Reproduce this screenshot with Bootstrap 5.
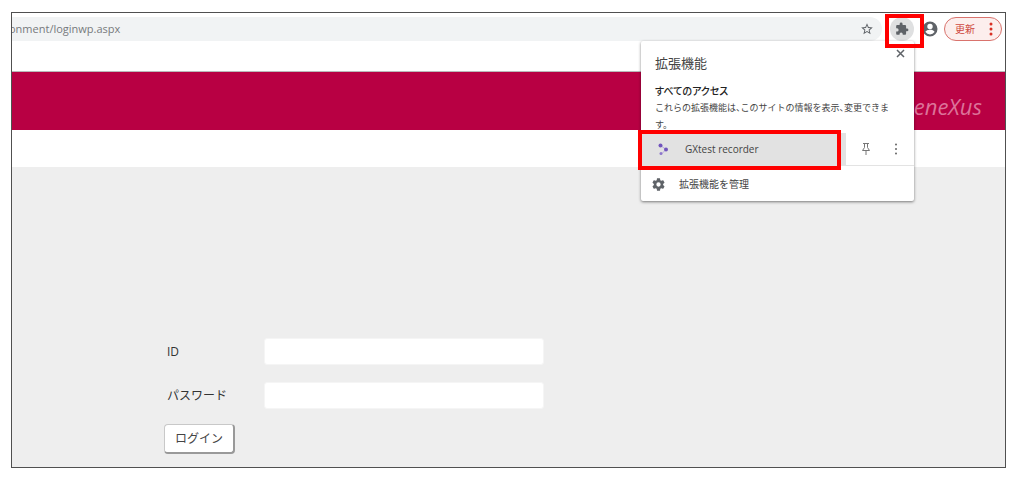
<!DOCTYPE html>
<html lang="ja">
<head>
<meta charset="utf-8">
<meta name="viewport" content="width=device-width, initial-scale=1">
<title>ログイン</title>
<link rel="stylesheet" href="https://cdn.jsdelivr.net/npm/bootstrap@5.3.0/dist/css/bootstrap.min.css">
<style>
  body { font-family: "Open Sans", "Noto Sans CJK JP", sans-serif; font-size: 12px; line-height: 18px; color: #444; background: #fff; padding: 12px 18px 27px 11px; }
  button { color: inherit; }
  svg { display: block; flex: none; }
  .window { border: 1px solid #505050; min-height: calc(100vh - 39px); background: #eee; }
  .toolbar { height: 59px; padding: 4px 3px 0 0; border-bottom: 1px solid #b9b9b9; }
  .address { height: 24px; background: #f1f3f4; border-radius: 0 12px 12px 0; padding-right: 8px; overflow: hidden; }
  .address input { border: 0; outline: 0; background: none; color: #777a7d; font-size: 11px; text-indent: -3px; padding: 0; min-width: 0; }
  .plain { border: 0; background: none; padding: 0; }
  .ext-btn { width: 24px; height: 24px; border-radius: 50%; background: #dfe0e1; margin: 0 7px 0 8px; }
  .mark-box { position: absolute; border: 4px solid #f00; pointer-events: none; z-index: 5; }
  .ext-btn .mark-box { inset: -3px -10px -7px -5px; }
  .update { height: 24px; width: 58px; border: 1px solid #d9736d; border-radius: 12px; background: #fceeed; color: #cf4a42; font-size: 10px; padding: 0 8px 0 10px; margin-left: 5px; }
  .banner { height: 58px; background: #b80043; padding: 22px 23px 0 0; }
  .brand-text { color: #dc7399; font: italic 500 22px/24px "Open Sans", sans-serif; }
  .strip { height: 37px; }
  .ext-panel { position: absolute; z-index: 3; top: 28px; right: 91px; width: 273px; height: 160px; background: #fff; border-radius: 2px; box-shadow: 0 1px 3px rgba(0,0,0,.5); font-size: 10px; line-height: 17px; padding-top: 12px; }
  .ext-panel h1 { font-size: 13px; line-height: 20px; font-weight: 400; margin: 0 14px 10px; }
  .ext-panel h2 { font-size: 10px; line-height: 16px; font-weight: 500; color: #222; margin: 0 14px; font-feature-settings: "palt"; }
  .ext-panel p { font-size: 9px; height: 34px; margin: 0 14px; width: 238px; font-feature-settings: "halt"; }
  .close-btn { position: absolute; right: 9px; top: 8px; }
  .ext-row { height: 33px; border-bottom: 1px solid #e3e3e3; }
  .ext-main { width: 205px; background: #e2e2e2; padding: 0 17px; gap: 16px; }
  .ext-row .mark-box { left: -3px; top: -3px; width: 203px; height: 40px; }
  .manage { height: 36px; padding: 0 11px; gap: 14px; }
  .login { padding: 171px 15px 12px 153px; }
  .login label { width: 99px; padding-left: 2px; color: #333; }
  .login .form-control { width: 280px; height: 27px; padding: 2px 6px; font-size: 12px; border: 1px solid #f5f5f5; border-radius: 3px; background: #fff; }
  .login form { gap: 17px; }
  .login-btn { width: 71px; height: 30px; margin: -2px 0 0 -1px; border: 1px solid #c8c8c8; border-right: 2px solid #999; border-bottom: 2px solid #999; border-radius: 4px; background: #fff; }
</style>
</head>
<body>
<div class="window position-relative">
  <header class="toolbar d-flex align-items-start bg-white">
    <div class="address flex-grow-1 d-flex align-items-center">
      <input class="flex-grow-1" type="text" aria-label="URL" value="onment/loginwp.aspx">
      <button class="plain" type="button" aria-label="ブックマーク">
        <svg width="14" height="14" viewBox="0 0 24 24" fill="#5f6368"><path d="M22 9.24l-7.19-.62L12 2 9.19 8.63 2 9.24l5.46 4.73L5.82 21 12 17.27 18.18 21l-1.63-7.03L22 9.24zM12 15.4l-3.76 2.27 1-4.28-3.32-2.88 4.38-.38L12 6.1l1.71 4.04 4.38.38-3.32 2.88 1 4.28L12 15.4z"/></svg>
      </button>
    </div>
    <button class="plain ext-btn position-relative d-flex align-items-center justify-content-center" type="button" aria-label="拡張機能">
      <svg width="14" height="14" viewBox="0 0 24 24" fill="#5f6368"><path d="M20.5 11H19V7c0-1.100-.9-2-2-2h-4V3.500a2.500 2.500 0 0 0-5 0V5H4c-1.100 0-2 .9-2 2v3.800h1.500a2.700 2.700 0 0 1 0 5.400H2V20c0 1.100.9 2 2 2h3.800v-1.500a2.700 2.700 0 0 1 5.400 0V22H17c1.100 0 2-.9 2-2v-4h1.500a2.500 2.500 0 0 0 0-5z"/></svg>
      <span class="mark-box"></span>
    </button>
    <button class="plain d-flex align-items-center" type="button" aria-label="プロフィール">
      <svg width="18" height="24" viewBox="0 0 24 32" fill="#5f6368"><path d="M12 6a10 10 0 1 0 0 20 10 10 0 0 0 0-20zm0 3a3.600 3.600 0 1 1 0 7.200A3.600 3.600 0 0 1 12 9zm0 14.200a7.200 7.200 0 0 1-6-3.200c0-2 4-3.100 6-3.100s6 1.100 6 3.100a7.200 7.200 0 0 1-6 3.200z"/></svg>
    </button>
    <button class="update d-flex align-items-center justify-content-between" type="button">更新
      <svg width="4" height="14" viewBox="0 0 4 14" fill="#d93025"><circle cx="2" cy="2" r="1.500"/><circle cx="2" cy="7" r="1.500"/><circle cx="2" cy="12" r="1.500"/></svg>
    </button>
  </header>

  <section class="ext-panel" aria-label="拡張機能">
    <button class="plain close-btn" type="button" aria-label="閉じる">
      <svg width="9" height="9" viewBox="0 0 9 9" stroke="#5f6368" stroke-width="1.500"><path d="M1 1l7 7M8 1l-7 7"/></svg>
    </button>
    <h1>拡張機能</h1>
    <h2>すべてのアクセス</h2>
    <p>これらの拡張機能は、このサイトの情報を表示、変更できます。</p>
    <div class="ext-row d-flex position-relative">
      <button class="plain ext-main d-flex align-items-center" type="button">
        <svg width="11" height="13" viewBox="0 0 11 13" fill="#7255bd"><path d="M2 2l6 4.500-4 4" fill="none" stroke="#b7a9df"/><circle cx="2.500" cy="2.500" r="2"/><circle cx="8" cy="6.500" r="2"/><circle cx="3" cy="10.500" r="1.500" fill="#8d76cb"/></svg>
        GXtest recorder
      </button>
      <div class="d-flex flex-grow-1 align-items-center justify-content-between px-3">
        <button class="plain" type="button" aria-label="固定">
          <svg width="8" height="12" viewBox="0 0 8 12" fill="none" stroke="#777"><path d="M1 .5h6M2.500 .5v4L.5 7.500h7l-2-3v-4M4 7.500V12"/></svg>
        </button>
        <button class="plain" type="button" aria-label="その他">
          <svg width="4" height="12" viewBox="0 0 4 12" fill="#666"><circle cx="2" cy="1.500" r="1"/><circle cx="2" cy="6" r="1"/><circle cx="2" cy="10.500" r="1"/></svg>
        </button>
      </div>
      <span class="mark-box"></span>
    </div>
    <button class="plain manage d-flex align-items-center" type="button">
      <svg width="13" height="13" viewBox="1.500 1.500 21 21" fill="#5f6368"><path d="M19.430 12.980c.04-.32.07-.64.07-.98s-.03-.66-.07-.98l2.110-1.650c.19-.15.240-.42.120-.64l-2-3.460c-.12-.22-.39-.3-.61-.22l-2.490 1c-.52-.4-1.080-.73-1.690-.98l-.38-2.650A.49.49 0 0 0 14 2h-4c-.25 0-.46.180-.49.420l-.38 2.650c-.61.250-1.170.59-1.690.98l-2.490-1c-.23-.09-.49 0-.61.220l-2 3.460c-.13.220-.07.490.120.640l2.110 1.650c-.04.320-.07.650-.07.980s.03.660.07.980l-2.110 1.650c-.19.150-.24.420-.12.640l2 3.460c.120.220.39.300.61.220l2.490-1c.520.4 1.080.730 1.690.98l.38 2.650c.03.240.240.420.490.420h4c.25 0 .46-.18.490-.42l.38-2.650c.61-.25 1.170-.59 1.690-.98l2.490 1c.23.09.49 0 .61-.22l2-3.460c.12-.22.07-.49-.12-.64l-2.110-1.650zM12 15.500a3.500 3.500 0 1 1 0-7 3.500 3.500 0 0 1 0 7z"/></svg>
      拡張機能を管理
    </button>
  </section>

  <div class="banner d-flex justify-content-end"><span class="brand-text">GeneXus</span></div>
  <div class="strip bg-white"></div>

  <main class="login">
    <form class="d-flex flex-column">
      <div class="d-flex align-items-center"><label for="user">ID</label><input class="form-control" id="user" type="text"></div>
      <div class="d-flex align-items-center"><label for="pass">パスワード</label><input class="form-control" id="pass" type="password"></div>
      <button class="login-btn" type="button">ログイン</button>
    </form>
  </main>
</div>
<script src="https://cdn.jsdelivr.net/npm/bootstrap@5.3.0/dist/js/bootstrap.bundle.min.js"></script>
</body>
</html>
